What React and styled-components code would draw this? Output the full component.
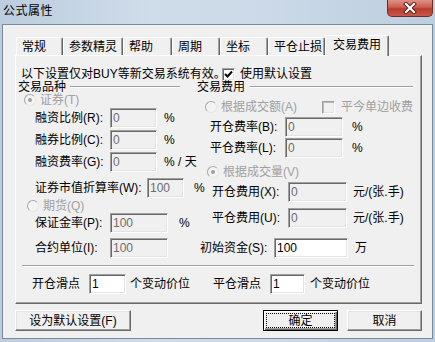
import React from 'react';
import styled, { createGlobalStyle } from 'styled-components';

const GlobalStyle = createGlobalStyle`
  html, body {
    margin: 0;
    padding: 0;
  }
  body {
    width: 435px;
    height: 342px;
    overflow: hidden;
    background: #c4d3e3;
    font-family: "Liberation Sans", "Noto Sans CJK SC", sans-serif;
    font-size: 12px;
    color: #000;
  }
`;

const Frame = styled.div`
  width: 435px;
  height: 342px;
  box-sizing: border-box;
  padding: 0 2px 3px 2px;
  display: flex;
  flex-direction: column;
  background: linear-gradient(90deg, #bccddf 0%, #cfdcea 35%, #cbd9e8 62%, #bdcee0 100%);
`;

const TitleBar = styled.div`
  height: 24px;
  display: flex;
  align-items: flex-start;
  justify-content: space-between;
  padding-left: 1px;
`;

const Title = styled.div`
  margin-top: 4px;
  font-size: 12px;
  line-height: 14px;
  letter-spacing: 0.5px;
`;

const CloseButton = styled.div`
  width: 46px;
  height: 17px;
  box-sizing: border-box;
  border: 1px solid #6e2c25;
  border-top: none;
  border-radius: 0 0 5px 5px;
  background: linear-gradient(#dc9286 0%, #cc5e4f 45%, #b83b2c 55%, #c9584a 100%);
  display: flex;
  align-items: center;
  justify-content: center;
`;

const Client = styled.div`
  flex: 1;
  background: #f0f0f0;
  border: 1px solid #7b8a9b;
  padding: 10px 10px 0 12px;
  display: flex;
  flex-direction: column;
`;

const TabStrip = styled.div`
  display: flex;
  align-items: flex-end;
  height: 20px;
  padding-left: 1px;
`;

const Tab = styled.div`
  width: ${p => p.$w}px;
  height: ${p => (p.$active ? 21 : 18)}px;
  margin-bottom: ${p => (p.$active ? -1 : 0)}px;
  box-sizing: border-box;
  border: 1px solid;
  border-color: #fff #696969 transparent #fff;
  border-bottom: none;
  border-radius: 2px 2px 0 0;
  box-shadow: inset -1px 0 #a0a0a0;
  background: #f0f0f0;
  display: flex;
  align-items: center;
  padding: 0 0 ${p => (p.$active ? 2 : 0)}px ${p => (p.$active ? 7 : 5)}px;
  line-height: 14px;
  white-space: nowrap;
  position: relative;
  z-index: ${p => (p.$active ? 1 : 0)};
`;

const Panel = styled.div`
  height: 249px;
  box-sizing: border-box;
  border: 1px solid;
  border-color: #fff #696969 #696969 #fff;
  box-shadow: inset -1px -1px #a0a0a0;
  padding: 0 7px 0 2px;
  display: flex;
  flex-direction: column;
`;

const InfoRow = styled.div`
  display: flex;
  align-items: center;
  height: 14px;
  margin-top: 11px;
  padding-left: 3px;
  line-height: 14px;
  white-space: nowrap;
`;

const InfoText = styled.span`
  width: 201px;
  flex: none;
`;

const Columns = styled.div`
  display: grid;
  grid-template-columns: 172px 216px;
  column-gap: 7px;
`;

const Column = styled.div`
  display: flex;
  flex-direction: column;
`;

const GroupHeader = styled.div`
  display: flex;
  align-items: center;
  height: 12px;
  gap: ${p => p.$gap}px;
  padding-right: ${p => p.$pr}px;
  line-height: 12px;
`;

const EtchedLine = styled.div`
  flex: 1;
  height: 0;
  border-top: 1px solid #a0a0a0;
  border-bottom: 1px solid #fff;
`;

const RadioRow = styled.div`
  display: flex;
  align-items: center;
  height: 12px;
  margin-top: ${p => p.$mt}px;
  padding-left: ${p => p.$pl}px;
  gap: 4px;
  color: #a0a0a0;
  line-height: 12px;
  white-space: nowrap;
`;

const RadioDot = styled.span`
  width: 12px;
  height: 12px;
  box-sizing: border-box;
  flex: none;
  border-radius: 50%;
  border: 1px solid;
  border-color: #a8a8a8 #e6e6e6 #e6e6e6 #a8a8a8;
  background: #f4f4f4;
  display: flex;
  align-items: center;
  justify-content: center;
  &::after {
    content: '';
    display: ${p => (p.$checked ? 'block' : 'none')};
    width: 4px;
    height: 4px;
    border-radius: 50%;
    background: #a0a0a0;
  }
`;

const CheckGroup = styled.div`
  display: flex;
  align-items: center;
  gap: ${p => p.$gap}px;
  margin-left: ${p => (p.$auto ? 'auto' : '0')};
  color: ${p => (p.$disabled ? '#a0a0a0' : '#000')};
`;

const CheckBox = styled.span`
  width: 13px;
  height: 13px;
  box-sizing: border-box;
  flex: none;
  border: 1px solid;
  border-color: #a0a0a0 #fff #fff #a0a0a0;
  box-shadow: inset 1px 1px ${p => (p.$disabled ? '#b8b8b8' : '#696969')}, inset -1px -1px #e3e3e3;
  background: ${p => (p.$disabled ? '#f0f0f0' : '#fff')};
  display: flex;
  align-items: center;
  justify-content: center;
`;

const FieldRow = styled.div`
  display: flex;
  align-items: center;
  height: 20px;
  margin-top: ${p => p.$mt}px;
  padding-left: ${p => p.$pl}px;
  line-height: 14px;
  white-space: nowrap;
`;

const FieldLabel = styled.span`
  width: ${p => p.$w}px;
  flex: none;
`;

const TextBox = styled.input`
  width: ${p => p.$w}px;
  height: 20px;
  box-sizing: border-box;
  flex: none;
  margin: 0;
  padding: 0 2px;
  border: 1px solid;
  border-color: #a0a0a0 #fff #fff #a0a0a0;
  box-shadow: inset 1px 1px #696969, inset -1px -1px #e3e3e3;
  background: ${p => (p.disabled ? '#f0f0f0' : '#fff')};
  color: ${p => (p.disabled ? '#6d6d6d' : '#000')};
  font-family: inherit;
  font-size: 12px;
  line-height: 16px;
  outline: none;
`;

const Suffix = styled.span`
  margin-left: ${p => p.$ml}px;
`;

const Separator = styled.div`
  margin: 7px 0 0 4px;
  height: 0;
  border-top: 1px solid #a0a0a0;
  border-bottom: 1px solid #fff;
`;

const SlipRow = styled.div`
  display: flex;
  align-items: center;
  height: 20px;
  margin-top: 7px;
  padding-left: 14px;
  line-height: 14px;
  white-space: nowrap;
`;

const SlipGroup = styled.div`
  display: flex;
  align-items: center;
  margin-left: ${p => p.$ml}px;
`;

const SlipLabel = styled.span`
  margin-right: 9px;
`;

const ButtonRow = styled.div`
  display: flex;
  justify-content: space-between;
  margin-top: 6px;
`;

const ButtonGroup = styled.div`
  display: flex;
  gap: 9px;
`;

const Button = styled.div`
  width: ${p => p.$w}px;
  height: 21px;
  box-sizing: border-box;
  border: 1px solid;
  border-color: ${p => (p.$default ? '#000' : '#fff #696969 #696969 #fff')};
  box-shadow: ${p =>
    p.$default
      ? 'inset 1px 1px #fff, inset -1px -1px #696969, inset -2px -2px #a0a0a0'
      : 'inset -1px -1px #a0a0a0, inset 1px 1px #e3e3e3'};
  background: #f0f0f0;
  display: flex;
  align-items: stretch;
  justify-content: stretch;
  padding: ${p => (p.$default ? 2 : 0)}px;
  line-height: 14px;
  white-space: nowrap;
`;

const ButtonFace = styled.span`
  flex: 1;
  display: flex;
  align-items: center;
  justify-content: center;
  border: 1px dotted ${p => (p.$focus ? '#000' : 'transparent')};
`;

const tabs = [
  { label: '常规', w: 47 },
  { label: '参数精灵', w: 60 },
  { label: '帮助', w: 49 },
  { label: '周期', w: 48 },
  { label: '坐标', w: 48 },
  { label: '平仓止损', w: 57 },
  { label: '交易费用', w: 64, active: true },
];

function Radio({ checked, children, mt, pl, extra }) {
  return (
    <RadioRow $mt={mt} $pl={pl}>
      <RadioDot $checked={checked} />
      <span>{children}</span>
      {extra}
    </RadioRow>
  );
}

function Field({ label, lw, value, iw, suffix, sml, mt, pl, enabled }) {
  return (
    <FieldRow $mt={mt} $pl={pl}>
      <FieldLabel $w={lw}>{label}</FieldLabel>
      <TextBox $w={iw} defaultValue={value} disabled={!enabled} />
      {suffix ? <Suffix $ml={sml}>{suffix}</Suffix> : null}
    </FieldRow>
  );
}

function CheckMark() {
  return (
    <svg width="9" height="9" viewBox="0 0 9 9">
      <path d="M1 4 L3.5 6.5 L8 1.5" fill="none" stroke="#000" strokeWidth="2" />
    </svg>
  );
}

export default function App() {
  return (
    <>
      <GlobalStyle />
      <Frame>
        <TitleBar>
          <Title>公式属性</Title>
          <CloseButton>
            <svg width="14" height="12" viewBox="0 0 14 12">
              <path d="M3 2 L11 10 M11 2 L3 10" stroke="#5a1d17" strokeWidth="4" strokeLinecap="square" />
              <path d="M3 2 L11 10 M11 2 L3 10" stroke="#fff" strokeWidth="2.2" strokeLinecap="square" />
            </svg>
          </CloseButton>
        </TitleBar>
        <Client>
          <TabStrip>
            {tabs.map(t => (
              <Tab key={t.label} $w={t.w} $active={t.active}>{t.label}</Tab>
            ))}
          </TabStrip>
          <Panel>
            <InfoRow>
              <InfoText>以下设置仅对BUY等新交易系统有效。</InfoText>
              <CheckGroup $gap={5}>
                <CheckBox><CheckMark /></CheckBox>
                <span>使用默认设置</span>
              </CheckGroup>
            </InfoRow>
            <Columns>
              <Column>
                <GroupHeader $gap={4} $pr={10}>
                  <span>交易品种</span>
                  <EtchedLine />
                </GroupHeader>
                <Radio checked mt={1} pl={6}>证券(T)</Radio>
                <Field mt={2} pl={17} label="融资比例(R):" lw={75} value="0" iw={47} suffix="%" sml={7} />
                <Field mt={2} pl={17} label="融券比例(C):" lw={75} value="0" iw={47} suffix="%" sml={7} />
                <Field mt={2} pl={17} label="融资费率(G):" lw={75} value="0" iw={47} suffix="% / 天" sml={7} />
                <Field mt={6} pl={17} label="证券市值折算率(W):" lw={112} value="100" iw={37} suffix="%" sml={10} />
                <Radio mt={2} pl={9}>期货(Q)</Radio>
                <Field mt={1} pl={17} label="保证金率(P):" lw={75} value="100" iw={58} suffix="%" sml={11} />
                <Field mt={5} pl={17} label="合约单位(I):" lw={75} value="100" iw={58} />
              </Column>
              <Column>
                <GroupHeader $gap={5} $pr={0}>
                  <span>交易费用</span>
                  <EtchedLine />
                </GroupHeader>
                <Radio
                  mt={8}
                  pl={8}
                  extra={
                    <CheckGroup $auto $disabled $gap={6}>
                      <CheckBox $disabled />
                      <span>平今单边收费</span>
                    </CheckGroup>
                  }
                >
                  根据成交额(A)
                </Radio>
                <Field mt={4} pl={13} label="开仓费率(B):" lw={75} value="0" iw={58} suffix="%" sml={9} />
                <Field mt={1} pl={13} label="平仓费率(L):" lw={75} value="0" iw={58} suffix="%" sml={9} />
                <Radio checked mt={8} pl={10}>根据成交量(V)</Radio>
                <Field mt={4} pl={15} label="开仓费用(X):" lw={76} value="0" iw={59} suffix="元/(张.手)" sml={6} />
                <Field mt={6} pl={15} label="平仓费用(U):" lw={76} value="0" iw={59} suffix="元/(张.手)" sml={6} />
                <Field mt={10} pl={3} label="初始资金(S):" lw={74} value="100" iw={74} suffix="万" sml={7} enabled />
              </Column>
            </Columns>
            <Separator />
            <SlipRow>
              <SlipGroup $ml={0}>
                <SlipLabel>开仓滑点</SlipLabel>
                <TextBox $w={37} defaultValue="1" />
                <Suffix $ml={4}>个变动价位</Suffix>
              </SlipGroup>
              <SlipGroup $ml={23}>
                <SlipLabel>平仓滑点</SlipLabel>
                <TextBox $w={35} defaultValue="1" />
                <Suffix $ml={5}>个变动价位</Suffix>
              </SlipGroup>
            </SlipRow>
          </Panel>
          <ButtonRow>
            <Button $w={116}><ButtonFace>设为默认设置(F)</ButtonFace></Button>
            <ButtonGroup>
              <Button $w={75} $default><ButtonFace $focus>确定</ButtonFace></Button>
              <Button $w={75}><ButtonFace>取消</ButtonFace></Button>
            </ButtonGroup>
          </ButtonRow>
        </Client>
      </Frame>
    </>
  );
}
